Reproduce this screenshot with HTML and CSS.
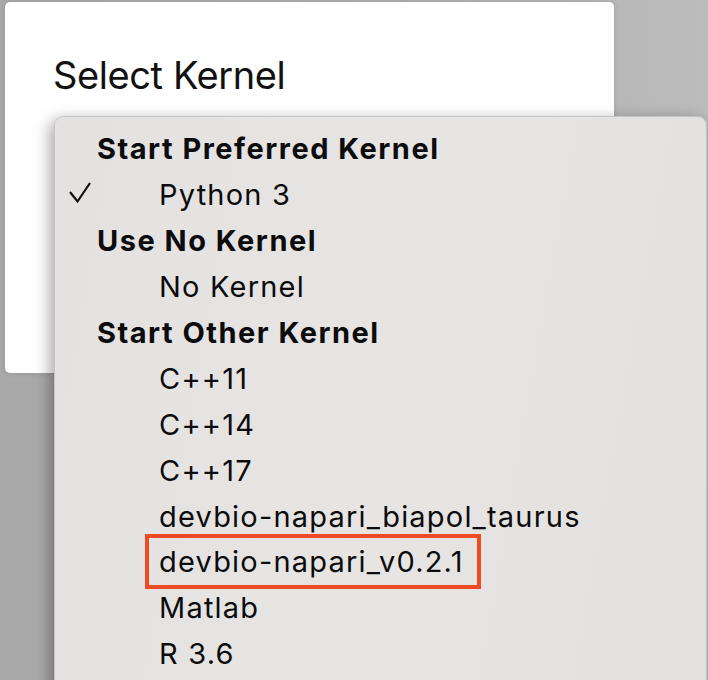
FILE: index.html
```html
<!DOCTYPE html>
<html>
<head>
<meta charset="utf-8">
<link rel="stylesheet" href="styles.css">
</head>
<body>
<div class="desk">
  <div class="dialog">
    <h1 class="title">Select Kernel</h1>
  </div>
  <div class="menu">
    <div class="row header">Start Preferred Kernel</div>
    <div class="row item">
      <svg class="check" width="24" height="24" viewBox="0 0 24 24"><polyline points="2,10 9.5,19.5 22,1" fill="none" stroke="#111" stroke-width="2.2" stroke-linejoin="miter"/></svg>
      <span class="label">Python 3</span>
    </div>
    <div class="row header">Use No Kernel</div>
    <div class="row item"><span class="label">No Kernel</span></div>
    <div class="row header">Start Other Kernel</div>
    <div class="row item"><span class="label">C++11</span></div>
    <div class="row item"><span class="label">C++14</span></div>
    <div class="row item"><span class="label">C++17</span></div>
    <div class="row item"><span class="label">devbio-napari_biapol_taurus</span></div>
    <div class="row item"><span class="label marked">devbio-napari_v0.2.1</span></div>
    <div class="row item"><span class="label">Matlab</span></div>
    <div class="row item"><span class="label">R 3.6</span></div>
  </div>
</div>
</body>
</html>
```

FILE: styles.css
```css
html, body {
  margin: 0;
  padding: 0;
}
body {
  width: 708px;
  height: 680px;
  overflow: hidden;
  font-family: Inter, "Liberation Sans", sans-serif;
}
.desk {
  position: relative;
  width: 708px;
  height: 680px;
  overflow: hidden;
  background: linear-gradient(90deg, #a9a9a9 0%, #adadad 40%, #b6b6b6 80%, #bcbcbc 100%);
  padding-top: 2px;
  box-sizing: border-box;
}
.dialog {
  margin-left: 5px;
  width: 609px;
  height: 371px;
  background: #ffffff;
  border-radius: 5px;
  box-shadow: 0 0 6px rgba(0,0,0,0.12);
  box-sizing: border-box;
  padding-top: 50px;
  padding-left: 48px;
}
.title {
  margin: 0;
  font-weight: 400;
  font-size: 38px;
  line-height: 46px;
  color: #111;
  letter-spacing: -0.4px;
}
.menu {
  position: absolute;
  left: 54px;
  top: 116px;
  width: 653px;
  height: 620px;
  box-sizing: border-box;
  background: linear-gradient(100deg, #e3e2e1 0%, #e6e5e4 50%, #e2e1e0 100%);
  border: 1px solid #c4c4c4;
  border-radius: 9px;
  box-shadow: -4px 4px 16px rgba(0,0,0,0.35);
  padding-top: 9px;
  color: #0c0c0c;
}
.row {
  height: 45.9px;
  display: flex;
  align-items: center;
  font-size: 29px;
  letter-spacing: 1.2px;
  white-space: nowrap;
}
.header {
  padding-left: 42px;
  font-weight: 700;
  letter-spacing: 1.5px;
}
.item {
  position: relative;
  padding-left: 104px;
}
.check {
  position: absolute;
  left: 13px;
  top: 10px;
}
.marked {
  border: 4px solid #ee4a24;
  height: 47px;
  display: flex;
  align-items: center;
  margin-left: -14px;
  padding-left: 10px;
  padding-right: 13px;
  flex-shrink: 0;
}
```
